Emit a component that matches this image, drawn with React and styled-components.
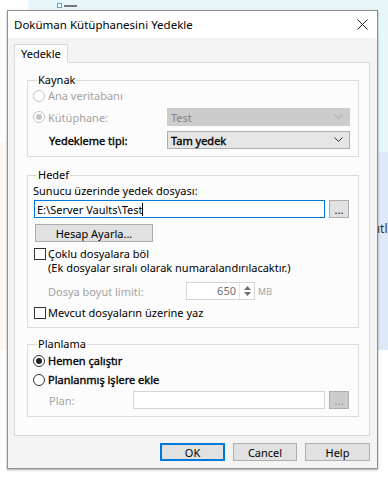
import styled, { createGlobalStyle } from "styled-components";

const Global = createGlobalStyle`
  html, body { margin: 0; padding: 0; background: #fff; }
  body { font-family: "Noto Sans", "Open Sans", sans-serif; font-size: 11px; color: #000; }
  * { box-sizing: border-box; }
`;

const Desktop = styled.div`
  position: relative;
  width: 388px;
  height: 480px;
  overflow: hidden;
  background: #fff;
`;

const TopStrip = styled.div`
  position: absolute;
  left: 28px;
  top: 0;
  right: 0;
  height: 11px;
  background: #e7f6f8;
  display: flex;
  align-items: center;
  padding-left: 29px;
  gap: 2px;
`;

const TinyBox = styled.span`
  width: 5px;
  height: 5px;
  border: 1px solid #5aa0d0;
  background: #fff;
`;

const TinyDash = styled.span`
  width: 13px;
  height: 2px;
  background: #777;
`;

const SidePanel = styled.div`
  position: absolute;
  right: 0;
  top: 0;
  width: 12px;
  height: 350px;
  background: linear-gradient(#e7f6f8 0 152px, #dde9f6 152px);
  overflow: hidden;
`;

const SideText = styled.span`
  position: absolute;
  left: 1px;
  top: 220px;
  color: #333;
  font-size: 12px;
`;

const LeftTint = styled.div`
  position: absolute;
  left: 0;
  top: 142px;
  width: 7px;
  height: 208px;
  background: #fff7ef;
`;

const Window = styled.div`
  position: absolute;
  left: 7px;
  top: 10px;
  width: 371px;
  height: 459px;
  border: 1px solid #8f8f8f;
  box-shadow: 0 1px 2px rgba(0, 0, 0, 0.35);
  display: flex;
  flex-direction: column;
  background: #f4f4f4;
`;

const TitleBar = styled.div`
  height: 27px;
  background: #fff;
  display: flex;
  align-items: center;
  justify-content: space-between;
  padding: 0 9px 0 6px;
  font-size: 11.5px;
`;

const Body = styled.div`
  flex: 1;
  display: flex;
  flex-direction: column;
  padding: 6px 7px 7px 6px;
`;

const Tabs = styled.div`
  display: flex;
  position: relative;
  z-index: 1;
  margin-bottom: -1px;
`;

const Tab = styled.div`
  height: 19px;
  padding: 0 6px;
  display: flex;
  align-items: center;
  background: #fcfcfc;
  border: 1px solid #d9d9d9;
  border-bottom-color: #fcfcfc;
`;

const Panel = styled.div`
  height: 374px;
  background: #fcfcfc;
  border: 1px solid #d9d9d9;
  padding: 10px 10px 0 12px;
  display: flex;
  flex-direction: column;
`;

const Group = styled.fieldset`
  margin: 0 0 ${(p) => p.$gap || 0}px 0;
  border: 1px solid #dcdcdc;
  padding: 0 ${(p) => p.$pr || 8}px 7px 5px;
  min-width: 0;
`;

const Legend = styled.legend`
  padding: 0 1px;
  margin-left: 4px;
  line-height: 14px;
  height: 14px;
`;

const Row = styled.div`
  display: flex;
  align-items: center;
  height: ${(p) => p.$h || 18}px;
  margin-top: ${(p) => p.$mt || 0}px;
  padding-left: ${(p) => p.$indent || 0}px;
`;

const FormGrid = styled.div`
  display: grid;
  grid-template-columns: ${(p) => p.$col}px 1fr;
  align-items: center;
  height: 18px;
  margin-top: ${(p) => p.$mt || 0}px;
  padding-left: ${(p) => p.$indent || 0}px;
`;

const Label = styled.span`
  color: ${(p) => (p.$disabled ? "#a3a3a3" : "#000")};
  -webkit-text-stroke: ${(p) => (p.$bold ? "0.35px #000" : "0")};
  white-space: nowrap;
`;

const RadioCircle = styled.span`
  width: 12px;
  height: 12px;
  border-radius: 50%;
  border: 1px solid ${(p) => (p.$disabled ? "#c4c4c4" : "#333")};
  background: #fff;
  margin-right: 3px;
  display: flex;
  align-items: center;
  justify-content: center;
  flex-shrink: 0;
  &::after {
    content: "";
    display: ${(p) => (p.$checked ? "block" : "none")};
    width: 6px;
    height: 6px;
    border-radius: 50%;
    background: ${(p) => (p.$disabled ? "#c4c4c4" : "#222")};
  }
`;

const CheckBox = styled.span`
  width: 12px;
  height: 12px;
  border: 1px solid #333;
  background: #fff;
  margin-right: 2px;
  margin-top: 1px;
  flex-shrink: 0;
`;

const Select = styled.div`
  height: 18px;
  border: 1px solid ${(p) => (p.$disabled ? "#cccccc" : "#adadad")};
  background: ${(p) => (p.$disabled ? "#cccccc" : "#e5e5e5")};
  color: ${(p) => (p.$disabled ? "#838383" : "#000")};
  -webkit-text-stroke: ${(p) => (p.$disabled ? "0" : "0.35px #000")};
  display: flex;
  align-items: center;
  justify-content: space-between;
  padding: 0 6px 0 3px;
`;

const Input = styled.div`
  flex: 1;
  height: 18px;
  border: 1px solid ${(p) => (p.$focus ? "#0078d7" : "#d5d5d5")};
  background: #fff;
  display: flex;
  align-items: center;
  padding-left: 2px;
`;

const Caret = styled.span`
  width: 1px;
  height: 13px;
  background: #000;
`;

const Button = styled.div`
  width: ${(p) => p.$w}px;
  height: 18px;
  border: 1px solid ${(p) => (p.$default ? "#0078d7" : "#adadad")};
  box-shadow: ${(p) => (p.$default ? "inset 0 0 0 1px #0078d7" : "none")};
  background: ${(p) => (p.$disabled ? "#cccccc" : "#e1e1e1")};
  color: ${(p) => (p.$disabled ? "#8a8a8a" : "#000")};
  display: flex;
  align-items: center;
  justify-content: center;
  flex-shrink: 0;
  line-height: 1;
`;

const InputRow = styled.div`
  display: flex;
  align-items: center;
  gap: 4px;
  margin-top: ${(p) => p.$mt || 0}px;
  padding-left: ${(p) => p.$indent || 0}px;
`;

const PlanGrid = styled.div`
  display: grid;
  grid-template-columns: 84px 1fr;
  align-items: center;
  margin-top: 2px;
  padding-left: 16px;
`;

const CheckRow = styled.div`
  display: flex;
  align-items: flex-start;
  margin-top: ${(p) => p.$mt || 0}px;
  padding-left: 1px;
  line-height: 14px;
`;

const SpinRow = styled.div`
  display: flex;
  align-items: center;
  margin-top: 7px;
  padding-left: 15px;
  height: 18px;
`;

const SpinLabel = styled(Label)`
  width: 138px;
`;

const Spin = styled.div`
  width: 69px;
  height: 18px;
  border: 1px solid #d5d5d5;
  background: #fff;
  display: flex;
  align-items: stretch;
`;

const SpinValue = styled.div`
  flex: 1;
  text-align: right;
  padding-right: 3px;
  line-height: 16px;
  color: #6f6f6f;
`;

const SpinArrows = styled.div`
  width: 15px;
  border-left: 1px solid #e3e3e3;
  display: flex;
  flex-direction: column;
  justify-content: center;
  align-items: center;
  gap: 2px;
`;

const Unit = styled.span`
  color: #a3a3a3;
  font-size: 9px;
  margin-left: 3px;
`;

const Footer = styled.div`
  display: flex;
  justify-content: flex-end;
  gap: 8px;
  margin-top: 7px;
`;

const Chevron = ({ color }) => (
  <svg width="9" height="6" viewBox="0 0 9 6">
    <polyline points="0.5,0.5 4.5,4.5 8.5,0.5" fill="none" stroke={color} strokeWidth="1" />
  </svg>
);

const Radio = ({ checked, disabled, bold, children }) => (
  <>
    <RadioCircle $checked={checked} $disabled={disabled} />
    <Label $disabled={disabled} $bold={bold}>{children}</Label>
  </>
);

export default function App() {
  return (
    <Desktop>
      <Global />
      <TopStrip>
        <TinyBox />
        <TinyDash />
      </TopStrip>
      <SidePanel>
        <SideText>ıtl</SideText>
      </SidePanel>
      <LeftTint />
      <Window>
        <TitleBar>
          <span>Doküman Kütüphanesini Yedekle</span>
          <svg width="11" height="11" viewBox="0 0 11 11">
            <path d="M0.5 0.5 L10.5 10.5 M10.5 0.5 L0.5 10.5" stroke="#222" strokeWidth="1" />
          </svg>
        </TitleBar>
        <Body>
          <Tabs>
            <Tab>Yedekle</Tab>
          </Tabs>
          <Panel>
            <Group $gap={11}>
              <Legend>Kaynak</Legend>
              <Row $h={17}>
                <Radio disabled>Ana veritabanı</Radio>
              </Row>
              <FormGrid $col={134} $mt={4}>
                <Row>
                  <Radio checked disabled>Kütüphane:</Radio>
                </Row>
                <Select $disabled>
                  <span>Test</span>
                  <Chevron color="#a8a8a8" />
                </Select>
              </FormGrid>
              <FormGrid $col={118} $mt={5} $indent={16}>
                <Label $bold>Yedekleme tipi:</Label>
                <Select>
                  <span>Tam yedek</span>
                  <Chevron color="#333" />
                </Select>
              </FormGrid>
            </Group>

            <Group $gap={9} $pr={9}>
              <Legend>Hedef</Legend>
              <Row $h={17}>
                <Label>Sunucu üzerinde yedek dosyası:</Label>
              </Row>
              <InputRow $mt={1} $indent={1}>
                <Input $focus>
                  <span>E:\Server Vaults\Test</span>
                  <Caret />
                </Input>
                <Button $w={20}>...</Button>
              </InputRow>
              <InputRow $mt={6} $indent={2}>
                <Button $w={118}>Hesap Ayarla...</Button>
              </InputRow>
              <CheckRow $mt={5}>
                <CheckBox />
                <div>
                  Çoklu dosyalara böl
                  <br />
                  (Ek dosyalar sıralı olarak numaralandırılacaktır.)
                </div>
              </CheckRow>
              <SpinRow>
                <SpinLabel $disabled>Dosya boyut limiti:</SpinLabel>
                <Spin>
                  <SpinValue>650</SpinValue>
                  <SpinArrows>
                    <svg width="7" height="4" viewBox="0 0 7 4"><polygon points="0,4 3.5,0 7,4" fill="#707070" /></svg>
                    <svg width="7" height="4" viewBox="0 0 7 4"><polygon points="0,0 3.5,4 7,0" fill="#707070" /></svg>
                  </SpinArrows>
                </Spin>
                <Unit>MB</Unit>
              </SpinRow>
              <CheckRow $mt={6}>
                <CheckBox />
                <div>Mevcut dosyaların üzerine yaz</div>
              </CheckRow>
            </Group>

            <Group $pr={9}>
              <Legend>Planlama</Legend>
              <Row $h={19}>
                <Radio checked bold>Hemen çalıştır</Radio>
              </Row>
              <Row $h={19}>
                <Radio bold>Planlanmış işlere ekle</Radio>
              </Row>
              <PlanGrid>
                <Label $disabled>Plan:</Label>
                <InputRow>
                  <Input />
                  <Button $w={20} $disabled>...</Button>
                </InputRow>
              </PlanGrid>
            </Group>
          </Panel>
          <Footer>
            <Button $w={65} $default>OK</Button>
            <Button $w={64}>Cancel</Button>
            <Button $w={65}>Help</Button>
          </Footer>
        </Body>
      </Window>
    </Desktop>
  );
}
